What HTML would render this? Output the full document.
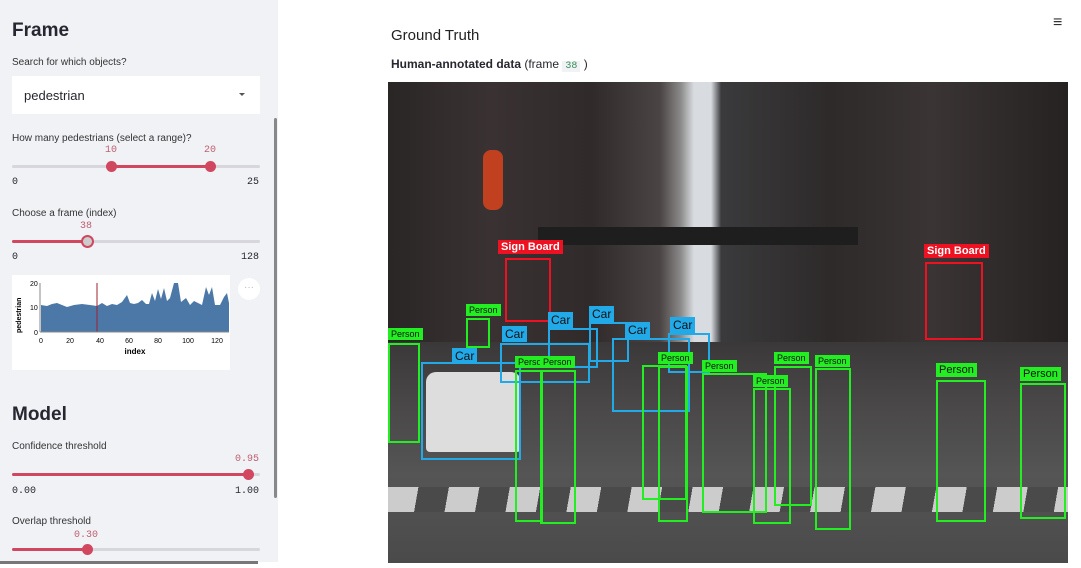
<!DOCTYPE html>
<html><head><style>
*{margin:0;padding:0;box-sizing:border-box}
body{width:1081px;height:568px;overflow:hidden;background:#fff;font-family:"Liberation Sans",sans-serif;position:relative;color:#262730}
.sb{position:absolute;left:0;top:0;width:278px;height:562px;background:#f0f2f6}
.a{position:absolute}
.lbl{font-size:10px;color:#333}
.mono{font-family:"Liberation Mono",monospace;font-size:10px}
.track{position:absolute;height:3px;background:#d6d6dc;border-radius:2px}
.fill{position:absolute;height:3px;background:#d0475f;border-radius:2px}
.knob{position:absolute;width:11px;height:11px;border-radius:50%;background:#d0475f}
.bx{position:absolute;border:2px solid;z-index:2}
.g{border-color:#22ee22}.b{border-color:#22a9e8}.r{border-color:#ee1122}
.t{position:absolute;font-size:11px;color:#111;padding:1px 3px;white-space:nowrap;z-index:3}
.tg{background:#22ee22;font-size:9px}.tb{background:#22a9e8;font-size:12px}.tr{background:#ee1122;color:#fff;font-size:11px;font-weight:bold}
</style></head><body>
<div class="sb"></div>
<div class="a" style="left:12px;top:20px;font-size:19px;font-weight:bold">Frame</div>
<div class="a lbl" style="left:12px;top:57px">Search for which objects?</div>
<div class="a" style="left:12px;top:76px;width:248px;height:38px;background:#fff"></div>
<div class="a" style="left:24px;top:88px;font-size:13px">pedestrian</div>
<div class="a" style="left:239px;top:93px;border-left:3px solid transparent;border-right:3px solid transparent;border-top:3px solid #555"></div>
<div class="a" style="left:274px;top:118px;width:3px;height:380px;background:#888;border-radius:2px"></div>
<div class="a lbl" style="left:12px;top:133px">How many pedestrians (select a range)?</div>
<div class="a mono" style="left:105px;top:145px;color:#c06070">10</div>
<div class="a mono" style="left:204px;top:145px;color:#c06070">20</div>
<div class="track" style="left:12px;top:165px;width:248px"></div>
<div class="fill" style="left:112px;top:165px;width:98px"></div>
<div class="knob" style="left:106px;top:161px"></div><div class="knob" style="left:205px;top:161px"></div>
<div class="a mono" style="left:12px;top:177px">0</div><div class="a mono" style="left:247px;top:177px">25</div>
<div class="a lbl" style="left:12px;top:208px">Choose a frame (index)</div>
<div class="a mono" style="left:80px;top:221px;color:#c06070">38</div>
<div class="track" style="left:12px;top:240px;width:248px"></div>
<div class="fill" style="left:12px;top:240px;width:75px"></div>
<div class="knob" style="left:81px;top:235px;width:13px;height:13px;background:#ccc;border:2px solid #d0475f"></div>
<div class="a mono" style="left:12px;top:252px">0</div><div class="a mono" style="left:241px;top:252px">128</div>
<div class="a" style="left:12px;top:275px;width:218px;height:95px;background:#fff"></div>
<svg class="a" style="left:12px;top:275px" width="230" height="95">
<polygon fill="#4c78a8" points="29,57 29,30 35,31 40,29 45,28 50,30 55,32 62,30 70,29 78,30 85,31 90,28 95,31 100,29 105,30 110,27 115,20 118,28 122,29 126,28 130,25 134,29 137,29 140,18 143,26 146,14 149,24 152,13 155,26 158,23 162,8 166,8 169,27 174,23 178,30 182,26 186,28 190,30 194,12 197,20 200,12 203,30 208,30 212,22 215,18 217,28 217,57"/>
<line x1="85" y1="8" x2="85" y2="57" stroke="#a02030" stroke-width="1"/>
<line x1="28" y1="8" x2="28" y2="57" stroke="#888"/>
<line x1="28" y1="57" x2="217" y2="57" stroke="#888"/>
<text x="18" y="11" font-size="7" font-family="Liberation Sans">20</text>
<text x="18" y="35" font-size="7" font-family="Liberation Sans">10</text>
<text x="22" y="60" font-size="7" font-family="Liberation Sans">0</text>
<g font-size="7" font-family="Liberation Sans" text-anchor="middle">
<text x="29" y="68">0</text><text x="58" y="68">20</text><text x="88" y="68">40</text><text x="117" y="68">60</text><text x="146" y="68">80</text><text x="176" y="68">100</text><text x="205" y="68">120</text></g>
<text x="123" y="79" font-size="8" font-weight="bold" text-anchor="middle" font-family="Liberation Sans">index</text>
<text x="9" y="58" font-size="7" font-weight="bold" transform="rotate(-90 9 58)" font-family="Liberation Sans">pedestrian</text>
</svg>
<div class="a" style="left:238px;top:278px;width:22px;height:22px;border-radius:50%;background:#fff;color:#bbb;font-size:10px;text-align:center;line-height:20px">···</div>
<div class="a" style="left:12px;top:404px;font-size:19px;font-weight:bold">Model</div>
<div class="a lbl" style="left:12px;top:441px">Confidence threshold</div>
<div class="a mono" style="left:235px;top:454px;color:#c06070">0.95</div>
<div class="track" style="left:12px;top:473px;width:248px"></div>
<div class="fill" style="left:12px;top:473px;width:236px"></div>
<div class="knob" style="left:243px;top:469px"></div>
<div class="a mono" style="left:12px;top:486px">0.00</div><div class="a mono" style="left:235px;top:486px">1.00</div>
<div class="a lbl" style="left:12px;top:516px">Overlap threshold</div>
<div class="a mono" style="left:74px;top:530px;color:#c06070">0.30</div>
<div class="track" style="left:12px;top:548px;width:248px"></div>
<div class="fill" style="left:12px;top:548px;width:75px"></div>
<div class="knob" style="left:82px;top:544px"></div>
<div class="a" style="left:0;top:561px;width:258px;height:3px;background:#777"></div>
<div class="a" style="left:1053px;top:14px;font-size:16px;color:#333">≡</div>
<div class="a" style="left:391px;top:27px;font-size:15px;color:#222">Ground Truth</div>
<div class="a" style="left:391px;top:57px;font-size:12px"><b>Human-annotated data</b> (frame <span class="mono" style="background:#f0f2f6;color:#3a8f5a;padding:0 3px">38</span> )</div>
<div class="a" style="left:388px;top:82px;width:680px;height:481px;overflow:hidden;background:linear-gradient(90deg,#2a2626 0%,#3a3232 15%,#302a2a 30%,#4a4444 40%,#8a8888 43%,#d8dce0 45%,#d8dce0 47.5%,#3a3a3c 49%,#2e2a2a 65%,#3a3434 80%,#262222 100%)">
 <div class="a" style="left:0;top:260px;width:680px;height:221px;background:linear-gradient(180deg,#3a3838 0%,#4a4848 30%,#555 60%,#4a4a4a 100%)"></div>
 <div class="a" style="left:0;top:405px;width:680px;height:25px;background:repeating-linear-gradient(100deg,#ccc 0 30px,#4a4a4a 30px 60px)"></div>
 <div class="a" style="left:150px;top:145px;width:320px;height:18px;background:#1e1e1e"></div>
 <div class="a" style="left:38px;top:290px;width:95px;height:80px;background:#ddd;border-radius:10px 10px 4px 4px"></div>
 <div class="a" style="left:95px;top:68px;width:20px;height:60px;background:#c04020;border-radius:8px"></div>
</div>
<div class="t tr" style="left:498px;top:240px">Sign Board</div><div class="bx r" style="left:505px;top:258px;width:46px;height:64px"></div>
<div class="t tr" style="left:924px;top:244px">Sign Board</div><div class="bx r" style="left:925px;top:262px;width:58px;height:78px"></div>
<div class="t tb" style="left:502px;top:326px">Car</div><div class="bx b" style="left:500px;top:343px;width:90px;height:40px"></div>
<div class="t tb" style="left:548px;top:312px">Car</div><div class="bx b" style="left:548px;top:328px;width:50px;height:40px"></div>
<div class="t tb" style="left:589px;top:306px">Car</div><div class="bx b" style="left:589px;top:322px;width:40px;height:40px"></div>
<div class="t tb" style="left:625px;top:322px">Car</div><div class="bx b" style="left:612px;top:338px;width:78px;height:74px"></div>
<div class="t tb" style="left:670px;top:317px">Car</div><div class="bx b" style="left:668px;top:333px;width:42px;height:40px"></div>
<div class="t tb" style="left:452px;top:348px">Car</div><div class="bx b" style="left:421px;top:362px;width:100px;height:98px"></div>
<div class="t tg" style="left:388px;top:328px">Person</div><div class="bx g" style="left:388px;top:343px;width:32px;height:100px"></div>
<div class="t tg" style="left:466px;top:304px">Person</div><div class="bx g" style="left:466px;top:318px;width:24px;height:30px"></div>
<div class="t tg" style="left:515px;top:356px">Person</div><div class="bx g" style="left:515px;top:370px;width:28px;height:152px"></div>
<div class="t tg" style="left:540px;top:356px">Person</div><div class="bx g" style="left:540px;top:370px;width:36px;height:154px"></div>
<div class="bx g" style="left:642px;top:365px;width:45px;height:135px"></div>
<div class="t tg" style="left:658px;top:352px">Person</div><div class="bx g" style="left:658px;top:366px;width:30px;height:156px"></div>
<div class="t tg" style="left:702px;top:360px">Person</div><div class="bx g" style="left:702px;top:373px;width:65px;height:140px"></div>
<div class="t tg" style="left:753px;top:375px">Person</div><div class="bx g" style="left:753px;top:388px;width:38px;height:136px"></div>
<div class="t tg" style="left:774px;top:352px">Person</div><div class="bx g" style="left:774px;top:366px;width:38px;height:140px"></div>
<div class="t tg" style="left:815px;top:355px">Person</div><div class="bx g" style="left:815px;top:368px;width:36px;height:162px"></div>
<div class="t tg" style="left:936px;top:363px;font-size:11px">Person</div><div class="bx g" style="left:936px;top:380px;width:50px;height:142px"></div>
<div class="t tg" style="left:1020px;top:367px;font-size:11px">Person</div><div class="bx g" style="left:1020px;top:383px;width:46px;height:136px"></div>
</body></html>
